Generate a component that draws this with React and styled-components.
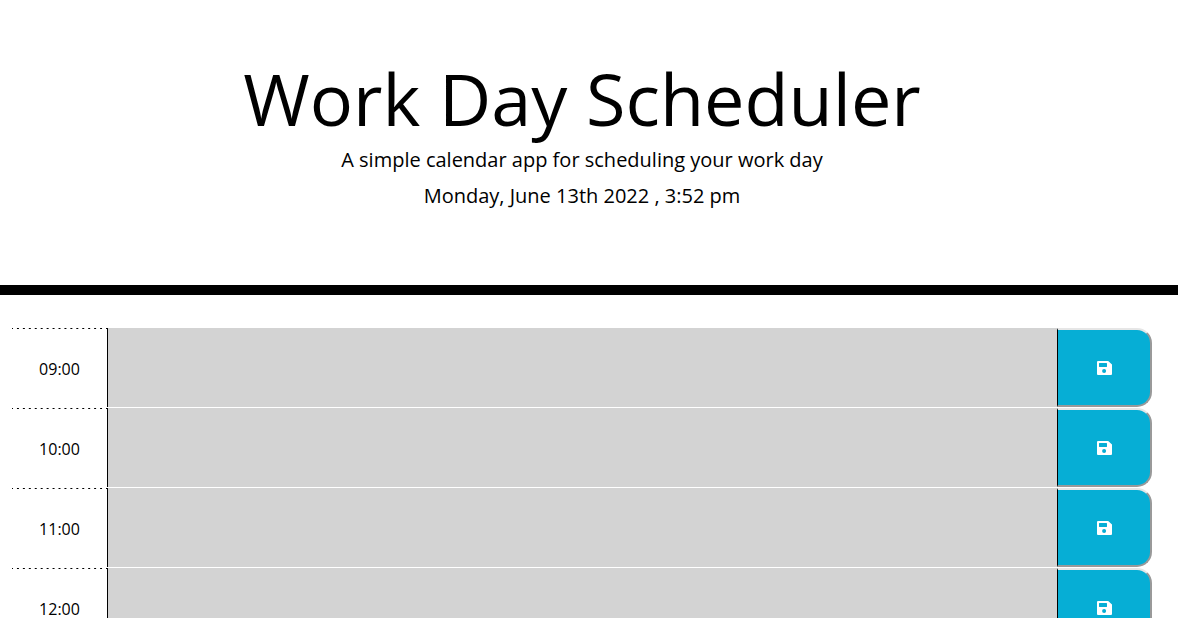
import React from "react";
import styled, { createGlobalStyle } from "styled-components";

const GlobalStyle = createGlobalStyle`
  *, *::before, *::after { box-sizing: border-box; }
  body {
    margin: 0;
    background: #fff;
    color: #000;
    font-family: "Open Sans", "Liberation Sans", sans-serif;
    font-size: 16px;
    line-height: 1;
  }
`;

const Header = styled.header`
  padding: 51px 14px 68px 0;
  margin-bottom: 32px;
  border-bottom: 10px solid #000;
  text-align: center;
`;

const Title = styled.h1`
  margin: 0;
  font-size: 72px;
  font-weight: 400;
  line-height: 94px;
`;

const Lead = styled.p`
  margin: 0;
  padding-bottom: 6px;
  font-size: 20px;
  line-height: 30px;
`;

const Schedule = styled.main`
  padding: 0 26px 0 12px;
`;

const Row = styled.form`
  display: grid;
  grid-template-columns: minmax(0, 1fr) minmax(0, 10fr) minmax(0, 1fr);
  height: 80px;
  border-top: 1px solid #fff;
`;

/* The sparse dashed rule above each hour: 2px marks, 4px gaps. */
const Hour = styled.label`
  display: flex;
  align-items: center;
  justify-content: center;
  padding-top: 3px;
  background: linear-gradient(to right, #000 2px, transparent 2px) -1px 0 / 6px 1px round no-repeat;
`;

const Description = styled.textarea`
  width: 100%;
  height: 100%;
  padding: 8px 12px;
  border: 0;
  border-left: 1px solid #000;
  border-radius: 0;
  background: #d3d3d3;
  color: #000;
  font: inherit;
  line-height: 24px;
  resize: none;
`;

const SaveButton = styled.button`
  display: flex;
  align-items: center;
  justify-content: center;
  padding: 1px 0 0 1px;
  border-style: solid;
  border-width: 2px 2px 2px 1px;
  border-color: #e6e6e6 #999 #999 #000;
  border-radius: 0 15px 15px 0;
  background: #06aed5;
  color: #fff;
  cursor: pointer;
`;

const SaveIcon = () => (
  <svg width="15" height="14" viewBox="0 0 15 14" fill="currentColor" aria-hidden="true">
    <path
      fillRule="evenodd"
      d="M1 0H11.2L15 3.6V13Q15 14 14 14H1Q0 14 0 13V1Q0 0 1 0ZM2.4 2Q2 2 2 2.4V5.6Q2 6 2.4 6H9.6Q10 6 10 5.6V2.4Q10 2 9.6 2ZM7.1 8A2 2 0 1 0 7.1 12A2 2 0 1 0 7.1 8Z"
    />
  </svg>
);

const hours = ["09:00", "10:00", "11:00", "12:00"];

export default function App() {
  return (
    <>
      <GlobalStyle />
      <Header>
        <Title>Work Day Scheduler</Title>
        <Lead>A simple calendar app for scheduling your work day</Lead>
        <Lead>Monday, June 13th 2022 , 3:52 pm</Lead>
      </Header>
      <Schedule>
        {hours.map((hour) => (
          <Row key={hour} onSubmit={(event) => event.preventDefault()}>
            <Hour htmlFor={`entry-${hour}`}>{hour}</Hour>
            <Description id={`entry-${hour}`} />
            <SaveButton type="submit" aria-label={`Save ${hour}`}>
              <SaveIcon />
            </SaveButton>
          </Row>
        ))}
      </Schedule>
    </>
  );
}
